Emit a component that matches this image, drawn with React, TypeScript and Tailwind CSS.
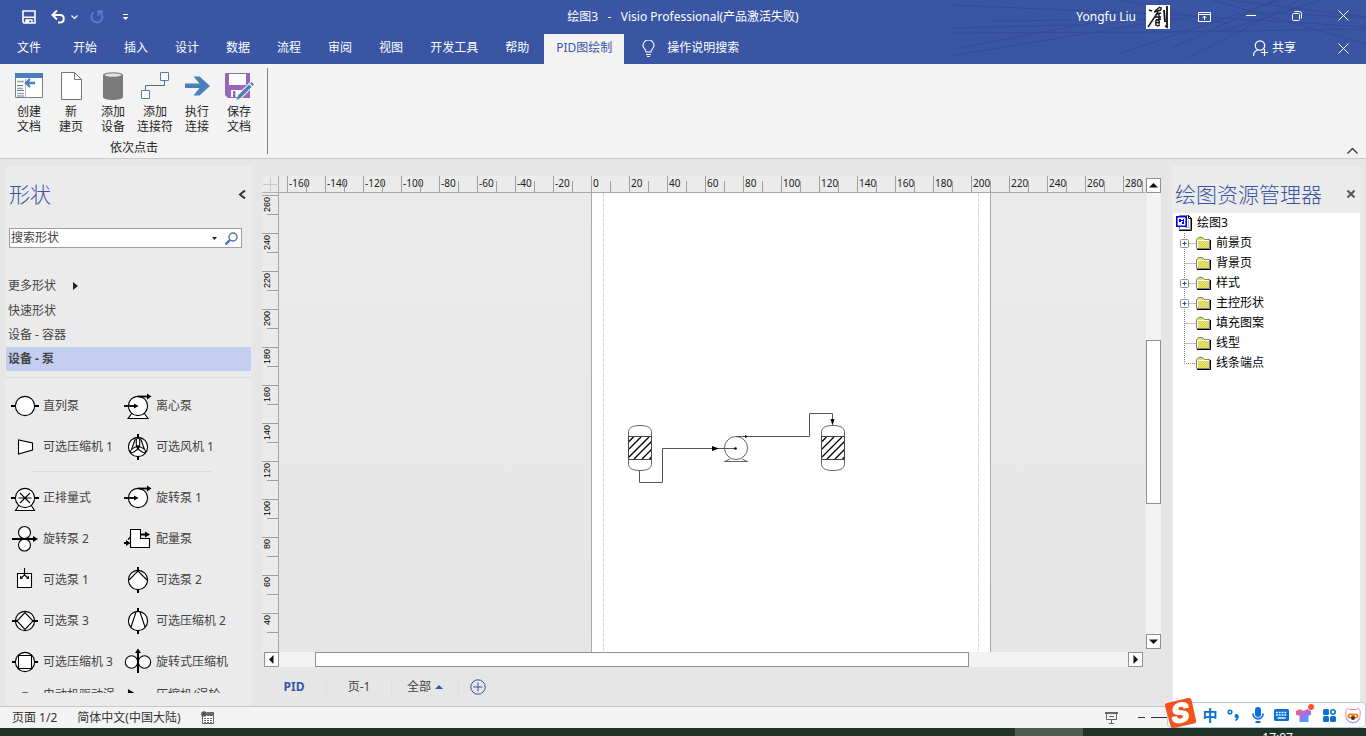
import React from 'react';

const FONT = 'font-[Noto_Sans,Noto_Sans_CJK_SC,sans-serif]';

const menuTabs = ['开始', '插入', '设计', '数据', '流程', '审阅', '视图', '开发工具', '帮助'];

const hTicks = Array.from({ length: 23 }, (_, i) => -160 + i * 20);
const vTicks = Array.from({ length: 12 }, (_, i) => 260 - i * 20);

/* ---------- ribbon icons ---------- */

const CreateDocIcon = () => (
    <svg width="28" height="28" viewBox="0 0 28 28">
        <path d="M.5 1.5h27v24H.5z" fill="#fff" stroke="#808080" />
        <path d="M0 1h28v5H0z" fill="#4a80ba" />
        <path d="M2 9.5h7M2 16.5h6M2 21.5h7" stroke="#a0a0a0" strokeWidth="1.6" />
        <path d="M2 13.5h6M2 18.5h7M2 24h7" stroke="#4a80ba" />
        <path d="M10.5 7v18" stroke="#b8b8b8" />
        <path d="M20 11h-8M15 7l-4 4 4 4" fill="none" stroke="#4a80ba" strokeWidth="2.4" />
    </svg>
);

const NewPageIcon = () => (
    <svg width="28" height="28" viewBox="0 0 28 28">
        <path d="M4.5.5h13l7 7v20h-20z" fill="#fff" stroke="#757575" />
        <path d="M17.5.5v7h7" fill="none" stroke="#757575" />
    </svg>
);

const CylinderIcon = () => (
    <svg width="28" height="28" viewBox="0 0 28 28">
        <path d="M4 3v22c0 4 20 4 20 0V3z" fill="#7a7a7a" />
        <ellipse cx="14" cy="3" rx="10" ry="2.8" fill="#7a7a7a" />
        <ellipse cx="14" cy="3" rx="8.2" ry="1.7" fill="#e0e0e0" />
    </svg>
);

const ConnectorIcon = () => (
    <svg width="28" height="28" viewBox="0 0 28 28">
        <path d="M4.5 18v-4.500h19V8" fill="none" stroke="#666" />
        <path d="M.5 18.500h8v8h-8zM19.500.5h8v8h-8z" fill="#fff" stroke="#4a80ba" />
    </svg>
);

const RunIcon = () => (
    <svg width="28" height="28" viewBox="0 0 28 28">
        <path d="M2 11.500h14.500L10.500 4.500h6L27 14l-10.500 9.500h-6l6-7.500H2z" fill="#4a80ba" />
    </svg>
);

const SaveEditIcon = () => (
    <svg width="30" height="28" viewBox="0 0 30 28">
        <path d="M1 1h25v25H4l-3-3z" fill="#9866bb" />
        <path d="M5 2h17v11H5z" fill="#fff" />
        <path d="M7 18h12v7H7z" fill="#fff" />
        <path d="M9 19h2.500v6H9z" fill="#9866bb" />
        <path d="M12 28l2-6L26 10l4 4-12 12z" fill="#f2f2f2" />
        <path d="M12.500 28l1.500-4.500L25 12.500l2.500 2.500L16.500 26z" fill="#4a80ba" />
        <path d="M26 11.500l1.500-1.500 2.500 2.500-1.500 1.500z" fill="#4a80ba" />
    </svg>
);

const ribbonItems = [
    { icon: <CreateDocIcon />, lines: ['创建', '文档'] },
    { icon: <NewPageIcon />, lines: ['新', '建页'] },
    { icon: <CylinderIcon />, lines: ['添加', '设备'] },
    { icon: <ConnectorIcon />, lines: ['添加', '连接符'] },
    { icon: <RunIcon />, lines: ['执行', '连接'] },
    { icon: <SaveEditIcon />, lines: ['保存', '文档'] },
];

/* ---------- stencil shapes, all on a 28x28 grid ---------- */

const Shape = ({ children }: { children: React.ReactNode }) => (
    <svg width="28" height="28" viewBox="0 0 28 28" fill="none" stroke="#000" strokeWidth="1.1" className="shrink-0">
        {children}
    </svg>
);

const Body = () => <circle cx="14" cy="14" r="9.600" fill="#fff" />;

const PumpArrows = () => (
    <>
        <path d="M0 14h10" strokeWidth="1.800" />
        <path d="M10 11.500l4.500 2.500-4.500 2.500z" fill="#000" stroke="none" />
        <path d="M14 4.500h10" strokeWidth="1.800" />
        <path d="M23 1.500l4.500 3-4.500 3z" fill="#000" stroke="none" />
    </>
);

const firstGroup = [
    { name: '直列泵', icon: <Shape><Body /><path d="M0 14h4.500M23.500 14H28" strokeWidth="2" /></Shape> },
    {
        name: '离心泵',
        icon: <Shape><path d="M8 21l-4 5.500h20L20 21" fill="#fff" /><Body /><PumpArrows /></Shape>,
    },
    { name: '可选压缩机 1', icon: <Shape><path d="M7.500 7v14l14-4v-7z" fill="#fff" /></Shape> },
    {
        name: '可选风机 1',
        icon: (
            <Shape>
                <path d="M14 1v4M14 23v4" strokeWidth="2" />
                <Body />
                <ellipse cx="14" cy="9.500" rx="1.800" ry="4.500" />
                <ellipse cx="14" cy="9.500" rx="1.800" ry="4.500" transform="rotate(125 14 14)" />
                <ellipse cx="14" cy="9.500" rx="1.800" ry="4.500" transform="rotate(235 14 14)" />
                <path d="M11.500 5.500l-4 11M16.500 5.500l4 11" />
                <circle cx="14" cy="14" r="1.200" fill="#000" />
            </Shape>
        ),
    },
];

const secondGroup = [
    {
        name: '正排量式',
        icon: (
            <Shape>
                <path d="M8 21l-3.500 5.500h19L20 21" fill="#fff" />
                <Body />
                <path d="M0 14h4.500M23.500 14H28" strokeWidth="2" />
                <path d="M7.500 14h13M9 9l10 10M19 9L9 19" />
            </Shape>
        ),
    },
    { name: '旋转泵 1', icon: <Shape><Body /><PumpArrows /></Shape> },
    {
        name: '旋转泵 2',
        icon: (
            <Shape>
                <circle cx="13.500" cy="7.500" r="6" fill="#fff" />
                <circle cx="13.500" cy="20" r="6" fill="#fff" />
                <path d="M1 14h22" strokeWidth="2" />
                <path d="M22 11l5 3-5 3z" fill="#000" stroke="none" />
            </Shape>
        ),
    },
    {
        name: '配量泵',
        icon: (
            <Shape>
                <path d="M6.500 4.500h10v9h9v9h-19z" fill="#fff" />
                <path d="M16.500 9.500h6M0 18h3" strokeWidth="2" />
                <path d="M21 6.500l5 3-5 3zM2 15l4.500 3L2 21z" fill="#000" stroke="none" />
                <path d="M4 14.500l2.500-2.500" />
            </Shape>
        ),
    },
    {
        name: '可选泵 1',
        icon: (
            <Shape>
                <path d="M6.500 7.500h14v14h-14z" fill="#fff" />
                <path d="M13.500 2v7l-3.500 3M13.500 9l3.500 3" />
                <path d="M9 9.500l3 3-3 .5zM18 9.500l-3 3 3 .5z" fill="#000" stroke="none" />
            </Shape>
        ),
    },
    {
        name: '可选泵 2',
        icon: <Shape><Body /><path d="M5 14l9-9 9 9" /><path d="M14 1v5M14 23v4" strokeWidth="2" /></Shape>,
    },
    {
        name: '可选泵 3',
        icon: <Shape><Body /><path d="M6 14l8-8.500 8 8.500-8 8.500z" /><path d="M1 14h5M22 14h5" strokeWidth="2" /></Shape>,
    },
    {
        name: '可选压缩机 2',
        icon: <Shape><Body /><path d="M12 5L7 20M16 5l5 15" /><path d="M14 1v4M14 23v4" strokeWidth="2" /></Shape>,
    },
    {
        name: '可选压缩机 3',
        icon: <Shape><Body /><path d="M7.500 7.500h13v13h-13z" /><path d="M1 14h4M23 14h4" strokeWidth="2" /></Shape>,
    },
    {
        name: '旋转式压缩机',
        icon: (
            <Shape>
                <circle cx="7.500" cy="14" r="6.200" fill="#fff" />
                <circle cx="20.500" cy="14" r="6.200" fill="#fff" />
                <path d="M14 3v22" strokeWidth="2" />
                <path d="M11 5l3-4.500L17 5z" fill="#000" stroke="none" />
            </Shape>
        ),
    },
    { name: '电动机驱动涡\n轮', icon: <Shape><circle cx="14" cy="14" r="9.600" fill="#fff" /><path d="M11 4.500h6" strokeWidth="2" /></Shape> },
    { name: '压缩机/涡轮\n膨胀机', icon: <Shape><path d="M4.500 1v20l16-5v-5z" fill="#000" /></Shape> },
];

const ShapeGrid = ({ items }: { items: typeof firstGroup }) => (
    <div className="grid grid-cols-[113px_minmax(0,1fr)] pl-[6px]">
        {items.map((s) => (
            <button key={s.name} type="button" className="flex h-[41px] items-center gap-1 whitespace-pre text-left">
                {s.icon}
                <span>{s.name}</span>
            </button>
        ))}
    </div>
);

/* ---------- drawing explorer ---------- */

const treeItems = [
    { name: '前景页', expandable: true },
    { name: '背景页', expandable: false },
    { name: '样式', expandable: true },
    { name: '主控形状', expandable: true },
    { name: '填充图案', expandable: false },
    { name: '线型', expandable: false },
    { name: '线条端点', expandable: false },
];

const TreeLine = ({ expandable, last }: { expandable: boolean; last: boolean }) => (
    <svg width="18" height="20" viewBox="0 0 18 20" className="shrink-0">
        <path d={last ? 'M6.500 0v10.500H18' : 'M6.500 0v20M6.500 10.500H18'} fill="none" stroke="#808080" strokeDasharray="1 1" />
        {expandable && (
            <>
                <rect x="2.500" y="6.500" width="8" height="8" rx="1" fill="#fff" stroke="#919191" />
                <path d="M4.500 10.500h4M6.500 8.500v4" stroke="#2b4a99" />
            </>
        )}
    </svg>
);

const FolderIcon = () => (
    <svg width="16" height="16" viewBox="0 0 16 16" className="shrink-0">
        <defs>
            <pattern id="folder" width="2" height="2" patternUnits="userSpaceOnUse">
                <path d="M0 0h2v2H0z" fill="#f6f200" />
                <path d="M0 0h1v1H0zM1 1h1v1H1z" fill="#c8c8c0" />
            </pattern>
        </defs>
        <path d="M.5 13.500v-9l2-2h4l2 2h5v9z" fill="url(#folder)" stroke="#808080" />
        <path d="M1.500 13V5.500H13" fill="none" stroke="#fff" />
        <path d="M1 14.500h13.500V5" fill="none" stroke="#000" />
    </svg>
);

const VisioFileIcon = () => (
    <svg width="17" height="16" viewBox="0 0 17 16" className="shrink-0">
        <path d="M3.500.5h9l2 2v12h-11z" fill="#fff" stroke="#808080" />
        <path d="M3 15.500h12.500V3.500L12.500.5v3h3" fill="none" stroke="#000" />
        <path d="M12.500 5v7M9 12.500h5" stroke="#bbb" />
        <path d="M.8 1.800h9.400v9.400H.8z" fill="#fff" stroke="#00f" strokeWidth="1.600" />
        <path d="M3 4h2v3H3zM6 7h2v2H6zM5 5h3v1H5zM7 4h1v3H7z" fill="#00f" />
    </svg>
);

/* ---------- canvas drawing ---------- */

const Tank = ({ x }: { x: number }) => (
    <g transform={`translate(${x} 232)`}>
        <path d="M.5 11V6.500C1 2 6 .5 12 .5S23 2 23.500 6.500v33c-.5 4.500-5.500 6-11.500 6S1 44 .5 39.500z" fill="#fff" stroke="#666" />
        <path d="M1 16.500L5.500 12M1 24l12-12M1 32l20-20M6 34l17.500-17.500M14 34l9.500-9.500M21.500 34l2-2" stroke="#000" strokeWidth="1.300" />
        <path d="M.5 11.500h23v23H.5z" stroke="#444" />
    </g>
);

const ProcessDiagram = () => (
    <svg width="398" height="458" viewBox="0 0 398 458" fill="none" className="block">
        <path d="M11.500 0v458M386.500 0v458" stroke="#d9d9d9" strokeDasharray="4 1" />
        <Tank x={36} />
        <Tank x={229} />
        <path d="M47.500 278v11.500h23v-34H132" stroke="#555" />
        <path d="M120 253l7 2.500-7 2.500z" fill="#000" />
        <path d="M138 266l-5.500 2.500h23L150 266" stroke="#666" />
        <circle cx="144" cy="255" r="11.500" fill="#fff" stroke="#666" />
        <path d="M130 255.500h14M144 243.500h73.500v-23h23V228" stroke="#555" />
        <circle cx="143.500" cy="255.500" r="1.300" fill="#000" />
        <path d="M153 242l3 1.500-3 1.500zM238.500 226h4l-2 6.500z" fill="#000" />
    </svg>
);

const ScrollButton = ({ d, label }: { d: string; label: string }) => (
    <button type="button" aria-label={label} className="flex size-[15px] shrink-0 items-center justify-center border border-[#919191] bg-white">
        <svg width="9" height="9" viewBox="0 0 9 9"><path d={d} fill="#111" /></svg>
    </button>
);

const CloseIcon = () => (
    <svg width="11" height="11" viewBox="0 0 11 11" stroke="#fff"><path d="M.5.5l10 10M10.500.5l-10 10" /></svg>
);

const Avatar = () => (
    <svg width="24" height="24" viewBox="0 0 24 24" fill="none" stroke="#111" className="ml-[10px] mr-[11px]">
        <path d="M0 0h24v24H0z" fill="#fff" stroke="none" />
        <path d="M3 5l3 1M14 2L9 6M8 7l7-2M15 2v3M12 7L2 22M10 9l5-1M9 12h6M13 8v11M10 15l5-1M9 18l5-1M11 21l3-1M10 15v6" strokeWidth="1.400" />
        <path d="M18 5l1 12M21 1v21l-2-1" strokeWidth="1.800" />
    </svg>
);

const TitleBar = () => (
    <header className="relative bg-[#3a55a4] text-white">
        <svg className="absolute right-0 top-0" width="416" height="64" viewBox="0 0 416 64" fill="none" stroke="#344c94">
            <path d="M0 5l210 9 206 13M40 21l200-2M0 28l130-3M0 33l220-1 196-3M8 48L200 12M0 56L230 18M168 54L330 0M222 48L325 0M237 58L350 0M170 0l110 24M262 0l154 44M280 0l136 17M270 32L372 0M300 12l116 6" />
        </svg>
        <div className="relative flex h-[34px] items-center">
            <div className="flex flex-1 items-center">
                <button type="button" aria-label="保存" className="ml-[22px]">
                    <svg width="14" height="14" viewBox="0 0 14 14" fill="none" stroke="#fff"><path d="M1 1h12v12H2L1 12z" strokeWidth="1.600" /><path d="M1 7.200h12M4 13v-3h6v3" strokeWidth="1.400" /><path d="M4 10h3v3H4z" fill="#fff" stroke="none" /></svg>
                </button>
                <button type="button" aria-label="撤消" className="ml-[15px]">
                    <svg width="14" height="14" viewBox="0 0 14 14" fill="none" stroke="#fff" strokeWidth="2"><path d="M6 .5L1.500 5 6 9.500M2 5h7c5 0 5 7.500 0 7.500H7" /></svg>
                </button>
                <button type="button" aria-label="撤消选项" className="ml-[6px]">
                    <svg width="7" height="5" viewBox="0 0 7 5" fill="none" stroke="#fff" strokeWidth="1.200"><path d="M.5.500l3 3 3-3" /></svg>
                </button>
                <button type="button" aria-label="恢复" className="ml-3">
                    <svg width="14" height="14" viewBox="0 0 14 14" fill="none" stroke="#5f7bcb" strokeWidth="1.800"><path d="M3.500 2.500a5.500 5.500 0 1 0 6.500-.2M8.500 6V1.500H13" /></svg>
                </button>
                <button type="button" aria-label="自定义" className="ml-[18px]">
                    <svg width="7" height="7" viewBox="0 0 7 7" fill="#fff"><path d="M1 0h5v1H1zM.5 3h6l-3 3z" /></svg>
                </button>
            </div>
            <h1 className="whitespace-pre">绘图3{'   -   '}Visio Professional(产品激活失败)</h1>
            <div className="flex h-full flex-1 items-center justify-end">
                <span>Yongfu Liu</span>
                <Avatar />
                <button type="button" aria-label="功能区显示选项" className="flex w-[47px] justify-center">
                    <svg width="13" height="10" viewBox="0 0 13 10" fill="none" stroke="#fff"><path d="M.5.5h12v9H.5zM.5 2.500h12M6.500 8V4M4.500 6l2-2 2 2" /></svg>
                </button>
                <button type="button" aria-label="最小化" className="flex w-[46px] justify-center">
                    <svg width="10" height="12" viewBox="0 0 10 12" stroke="#fff"><path d="M0 4.500h10" /></svg>
                </button>
                <button type="button" aria-label="还原" className="flex w-[46px] justify-center">
                    <svg width="10" height="12" viewBox="0 0 10 12" fill="none" stroke="#fff"><rect x=".5" y="2.500" width="7" height="7" rx="1" /><path d="M2.500.5h5a2 2 0 0 1 2 2v5" /></svg>
                </button>
                <button type="button" aria-label="关闭" className="flex w-[46px] justify-center pb-1"><CloseIcon /></button>
            </div>
        </div>
        <nav className="relative flex h-[30px] items-center">
            <button type="button" className="ml-[17px] mr-5 pb-[2px]">文件</button>
            <div className="flex h-full gap-[3px]">
                {menuTabs.map((t) => (
                    <button key={t} type="button" className="px-3 pb-[2px]">{t}</button>
                ))}
                <button type="button" className="bg-[#f3f3f3] px-3 pb-[2px] text-[#3a55a4]">PID图绘制</button>
            </div>
            <button type="button" className="ml-[18px] flex items-center gap-3 pb-[2px]">
                <svg width="13" height="17" viewBox="0 0 13 17" fill="none" stroke="#fff"><path d="M4 12c0-3-3-3.500-3-6.500a5.300 5.300 0 0 1 11 0c0 3-3 3.500-3 6.500zM4 14.500h5M5 16.500h3" strokeWidth="1.100" /></svg>
                <span>操作说明搜索</span>
            </button>
            <button type="button" className="ml-auto mr-6 flex items-center gap-1 pb-[2px]">
                <svg width="15" height="17" viewBox="0 0 15 17" fill="none" stroke="#fff" strokeWidth="1.200"><circle cx="7" cy="5.500" r="4.700" /><path d="M.5 16c0-3.500 2-5.500 4.500-6M11.500 9v7M8 12.500h7" /></svg>
                <span>共享</span>
            </button>
            <button type="button" aria-label="关闭文档" className="flex w-[46px] justify-center pb-[2px]"><CloseIcon /></button>
        </nav>
    </header>
);

const Ribbon = () => (
    <section className="flex h-[95px] border-b border-[#cacaca] bg-[#f3f3f3] text-[#262626]">
        <div className="flex flex-col items-center pl-2">
            <div className="flex pt-2">
                {ribbonItems.map((r) => (
                    <button key={r.lines.join('')} type="button" className="flex w-[42px] flex-col items-center whitespace-nowrap leading-[15px]">
                        {r.icon}
                        <span className="mt-1">{r.lines[0]}</span>
                        <span>{r.lines[1]}</span>
                    </button>
                ))}
            </div>
            <span className="mt-[6px] leading-4">依次点击</span>
        </div>
        <div className="my-1 ml-[7px] w-px bg-[#808080]" />
        <button type="button" aria-label="折叠功能区" className="mb-1 ml-auto mr-2 self-end">
            <svg width="11" height="6" viewBox="0 0 11 6" fill="none" stroke="#333" strokeWidth="1.300"><path d="M.5 5.500l5-5 5 5" /></svg>
        </button>
    </section>
);

const ShapesPanel = () => (
    <aside className="mt-[7px] flex w-[247px] shrink-0 flex-col bg-[#ebebeb] text-[#444]">
        <div className="flex h-[62px] items-center justify-between pl-1 pr-[6px] pb-[6px]">
            <h2 className="text-[21px] font-light text-[#3a55a4]">形状</h2>
            <button type="button" aria-label="折叠">
                <svg width="8" height="9" viewBox="0 0 8 9" fill="none" stroke="#333" strokeWidth="2"><path d="M7 .5L2 4.500l5 4" /></svg>
            </button>
        </div>
        <div className="ml-1 mr-[10px] flex h-5 items-center border border-[#a0a0a0] bg-white">
            <input aria-label="搜索形状" defaultValue="搜索形状" className="min-w-0 flex-1 pl-px text-[#444] outline-none" />
            <svg width="5" height="3" viewBox="0 0 5 3" className="mr-2"><path d="M0 0h5L2.500 3z" fill="#222" /></svg>
            <button type="button" aria-label="搜索" className="mr-[3px]">
                <svg width="13" height="13" viewBox="0 0 13 13" fill="none" stroke="#4a74b8"><circle cx="8" cy="5" r="4" strokeWidth="1.400" /><path d="M5 8l-4.500 4.500" strokeWidth="2.400" /></svg>
            </button>
        </div>
        <div className="mt-[26px] flex flex-col">
            <button type="button" className="mb-px flex h-6 items-center gap-[17px] pl-[3px]">
                更多形状
                <svg width="5" height="8" viewBox="0 0 5 8"><path d="M0 0l5 4-5 4z" fill="#222" /></svg>
            </button>
            <button type="button" className="h-6 pl-[3px] text-left">快速形状</button>
            <button type="button" className="h-6 pl-[3px] text-left">设备 - 容器</button>
            <button type="button" className="mx-px h-6 bg-[#c3cef1] pl-[2px] text-left font-bold">设备 - 泵</button>
        </div>
        <div className="mt-[6px] border-t border-[#dcdcdc]" />
        <div className="mb-[13px] min-h-0 flex-1 overflow-hidden pt-[7px]">
            <ShapeGrid items={firstGroup} />
            <div className="mb-[5px] ml-[27px] mr-10 mt-1 border-t border-[#dcdcdc]" />
            <ShapeGrid items={secondGroup} />
        </div>
    </aside>
);

const Workspace = () => (
    <main className="ml-[10px] flex min-w-0 flex-1 flex-col pt-[17px]">
        <div className="flex min-h-0 flex-1">
            <div className="flex min-w-0 flex-1 flex-col">
                <div className="flex h-[17px] shrink-0 bg-[#ebebeb]">
                    <div className="w-[17px] shrink-0 border-b border-r border-[#b0b0b0]">
                        <svg width="16" height="16" viewBox="0 0 16 16" stroke="#c8c8c8"><path d="M1 8.500h14M8.500 1v14" /></svg>
                    </div>
                    <div className="flex min-w-0 flex-1 overflow-hidden border-b border-[#a8a8a8] pl-2">
                        {hTicks.map((n) => (
                            <div key={n} className="flex w-[38px] shrink-0 border-l border-[#a0a0a0]">
                                <span className="w-[18px] whitespace-nowrap pl-px text-[10px] leading-[15px] text-[#222]">{n}</span>
                                <span className="h-[11px] self-end border-l border-[#a0a0a0]" />
                            </div>
                        ))}
                    </div>
                </div>
                <div className="flex min-h-0 flex-1">
                    <div className="w-[17px] shrink-0 overflow-hidden border-r border-[#a8a8a8] bg-[#ebebeb] pt-[2px]">
                        {vTicks.map((n) => (
                            <div key={n} className="h-[38px] border-t border-[#a0a0a0]">
                                <span className="flex h-[18px] w-[11px] rotate-180 items-center justify-end pb-px font-['Liberation_Sans'] text-[9px] leading-[11px] text-black [writing-mode:vertical-rl]">{n}</span>
                                <span className="ml-[5px] block border-t border-[#a0a0a0]" />
                            </div>
                        ))}
                    </div>
                    <div className="min-w-0 flex-1 overflow-hidden bg-linear-to-b from-[#ebebeb] to-[#e6e6e6] pl-[312px]">
                        <div className="h-full w-[400px] overflow-hidden border-x border-[#a8a8b0] bg-white">
                            <ProcessDiagram />
                        </div>
                    </div>
                </div>
            </div>
            <div className="mb-[3px] ml-px mt-[2px] flex w-[15px] shrink-0 flex-col bg-[#f3f3f3]">
                <ScrollButton label="向上" d="M0 6.500h9L4.500 2z" />
                <div className="mt-[147px] h-[164px] border border-[#919191] bg-white" />
                <div className="flex-1" />
                <ScrollButton label="向下" d="M0 2.500h9L4.500 7z" />
            </div>
        </div>
        <div className="ml-[2px] mr-[18px] flex h-[15px] bg-[#f3f3f3]">
            <ScrollButton label="向左" d="M6.500 0v9L2 4.500z" />
            <div className="ml-9 mr-[159px] flex-1 border border-[#919191] bg-white" />
            <ScrollButton label="向右" d="M2.500 0v9L7 4.500z" />
        </div>
        <div className="flex h-[39px] items-center text-[#444]">
            <button type="button" className="w-[65px] border-r border-[#dedede] text-[12px] font-bold text-[#3a55a4]">PID</button>
            <button type="button" className="w-[65px] border-r border-[#dedede]">页-1</button>
            <button type="button" className="flex w-[67px] items-center gap-1 border-r border-[#dedede] pl-[15px]">
                全部
                <svg width="8" height="4" viewBox="0 0 8 4"><path d="M0 4h8L4 0z" fill="#3a55a4" /></svg>
            </button>
            <button type="button" aria-label="插入页" className="ml-[11px]">
                <svg width="16" height="16" viewBox="0 0 16 16" fill="none" stroke="#3a55a4"><circle cx="8" cy="8" r="7.200" /><path d="M8 3.500v9M3.500 8h9" /></svg>
            </button>
        </div>
    </main>
);

const Explorer = () => (
    <aside className="ml-[11px] mr-[5px] mt-[7px] flex w-[189px] shrink-0 flex-col bg-[#ebebeb] px-px">
        <div className="flex h-[47px] items-center justify-between pl-[2px] pr-[5px] pt-2">
            <h2 className="whitespace-nowrap text-[21px] font-light text-[#3a55a4]">绘图资源管理器</h2>
            <button type="button" aria-label="关闭">
                <svg width="8" height="8" viewBox="0 0 8 8" stroke="#555" strokeWidth="2"><path d="M.5.5l7 7M7.500.5l-7 7" /></svg>
            </button>
        </div>
        <ul className="flex-1 bg-white text-black">
            <li className="flex h-5 items-center gap-1 pl-[3px]"><VisioFileIcon />绘图3</li>
            {treeItems.map((t, i) => (
                <li key={t.name} className="flex h-5 items-center pl-[5px]">
                    <TreeLine expandable={t.expandable} last={i === treeItems.length - 1} />
                    <FolderIcon />
                    <span className="ml-1">{t.name}</span>
                </li>
            ))}
        </ul>
    </aside>
);

const ImeBar = () => (
    <div className="absolute bottom-0 right-0 grid h-[26px] w-[199px] grid-cols-7 place-items-center rounded-sm border border-[#b4cbe4] bg-white pl-[30px] text-[#0a6fd6]">
        <svg className="absolute -left-[4px] -top-[6px]" width="33" height="33" viewBox="0 0 33 33">
            <path d="M3 6L24 1q3-.5 3.500 2L32 23q.5 3-2 3.500L10 31q-3 .5-3.500-2L1 9q-.5-2.500 2-3z" fill="#f4511e" />
            <text x="16" y="26" fontSize="28" fontWeight="900" fontStyle="italic" textAnchor="middle" fill="#fff" fontFamily="Inter" transform="rotate(-8 16 16)">S</text>
        </svg>
        <button type="button" className="text-[15px] leading-6 font-bold">中</button>
        <svg width="13" height="13" viewBox="0 0 13 13" fill="none" stroke="currentColor"><circle cx="3" cy="3" r="1.800" strokeWidth="1.500" /><circle cx="9.500" cy="7" r="2" fill="currentColor" stroke="none" /><path d="M11 7c0 2.500-.5 3.500-2.500 4.500" strokeWidth="1.500" /></svg>
        <svg width="12" height="16" viewBox="0 0 12 16" fill="none" stroke="currentColor" strokeWidth="1.800"><rect x="3" y="0" width="6" height="10" rx="3" fill="currentColor" stroke="none" /><path d="M1 6.500c0 7 10 7 10 0M3.500 15h5" /></svg>
        <svg width="15" height="12" viewBox="0 0 15 12"><rect width="15" height="12" rx="1.500" fill="currentColor" /><path d="M2 3.500h11M2 6h11" stroke="#fff" strokeWidth="1.600" strokeDasharray="1.800 1" /><path d="M3.500 9h8" stroke="#fff" strokeWidth="1.400" /></svg>
        <svg width="18" height="18" viewBox="0 0 18 18" className="mb-1">
            <defs>
                <linearGradient id="shirt" x1="0" y1="0" x2=".6" y2="1"><stop stopColor="#ff6a3c" /><stop offset=".55" stopColor="#a86af0" /><stop offset="1" stopColor="#38a8ff" /></linearGradient>
            </defs>
            <path d="M4 5c2 2 5 2 7 0l4 2v4l-2.500.5V18h-9v-6.500L0 11V7z" fill="url(#shirt)" />
            <circle cx="15" cy="3" r="3" fill="#ff5430" />
        </svg>
        <svg width="13" height="13" viewBox="0 0 13 13"><rect width="6" height="6" rx="1.500" fill="currentColor" /><circle cx="10" cy="3" r="2.200" fill="none" stroke="currentColor" strokeWidth="1.600" /><rect y="7" width="6" height="6" rx="1.500" fill="currentColor" /><rect x="7" y="7" width="6" height="6" rx="1.500" fill="currentColor" /></svg>
        <svg width="16" height="17" viewBox="0 0 16 17" fill="none">
            <path d="M1 9C0 3 2 0 4.500 2.500h7C14 0 16 3 15 9c0 9-14 9-14 0z" fill="#fff" stroke="#e48aa6" />
            <path d="M1.500 11c2 6 11 6 13 0" stroke="#7fa8f5" />
            <rect x="2.500" y="6.500" width="11" height="5" rx="2.500" fill="#ff7a1a" />
            <circle cx="8" cy="11" r="2" fill="#333" /><circle cx="5.500" cy="9" r="1" fill="#fff" /><circle cx="10.500" cy="9" r="1" fill="#fff" />
        </svg>
    </div>
);

const StatusBar = () => (
    <footer className="relative flex h-[22px] items-center border-t border-[#c6c6c6] bg-[#f3f3f3] pl-3 text-[#333]">
        <span>页面 1/2</span>
        <span className="ml-5">简体中文(中国大陆)</span>
        <svg width="13" height="13" viewBox="0 0 13 13" className="ml-5">
            <path d="M1.500 3.500h11v9h-11z" fill="#fff" stroke="#666" />
            <path d="M6 1h7v4H6z" fill="#666" />
            <path d="M3 7.500h8M3 9.500h8M3 11.500h8" stroke="#666" strokeDasharray="2 1" />
            <circle cx="3" cy="3" r="2.800" fill="#555" />
        </svg>
        <div className="ml-auto mr-[196px] flex items-center">
            <svg width="13" height="12" viewBox="0 0 13 12" fill="none" stroke="#666"><path d="M0 1h13" strokeWidth="2" /><path d="M1.500 2v5.500h10V2M4 4.500h5M6.500 7.500V11M4 11.500h5" /></svg>
            <span className="ml-5 h-px w-[7px] bg-[#333]" />
            <span className="ml-[6px] h-px w-[19px] bg-[#333]" />
        </div>
        <ImeBar />
    </footer>
);

const App: React.FC = () => {
    return (
        <div className={`flex h-screen flex-col overflow-hidden bg-[#e6e6e6] text-[12px] leading-4 ${FONT}`}>
            <TitleBar />
            <Ribbon />
            <div className="flex min-h-0 flex-1 pl-[5px]">
                <ShapesPanel />
                <Workspace />
                <Explorer />
            </div>
            <StatusBar />

            {/* Top edge of the desktop taskbar */}
            <div className="flex h-2 justify-end overflow-hidden bg-[#203329] text-white">
                <div className="w-[68px] bg-[#4c5c53]" />
                <div className="flex w-[283px] justify-end pr-[73px] pt-[2px]">17:07</div>
            </div>
        </div>
    );
};

export default App;
